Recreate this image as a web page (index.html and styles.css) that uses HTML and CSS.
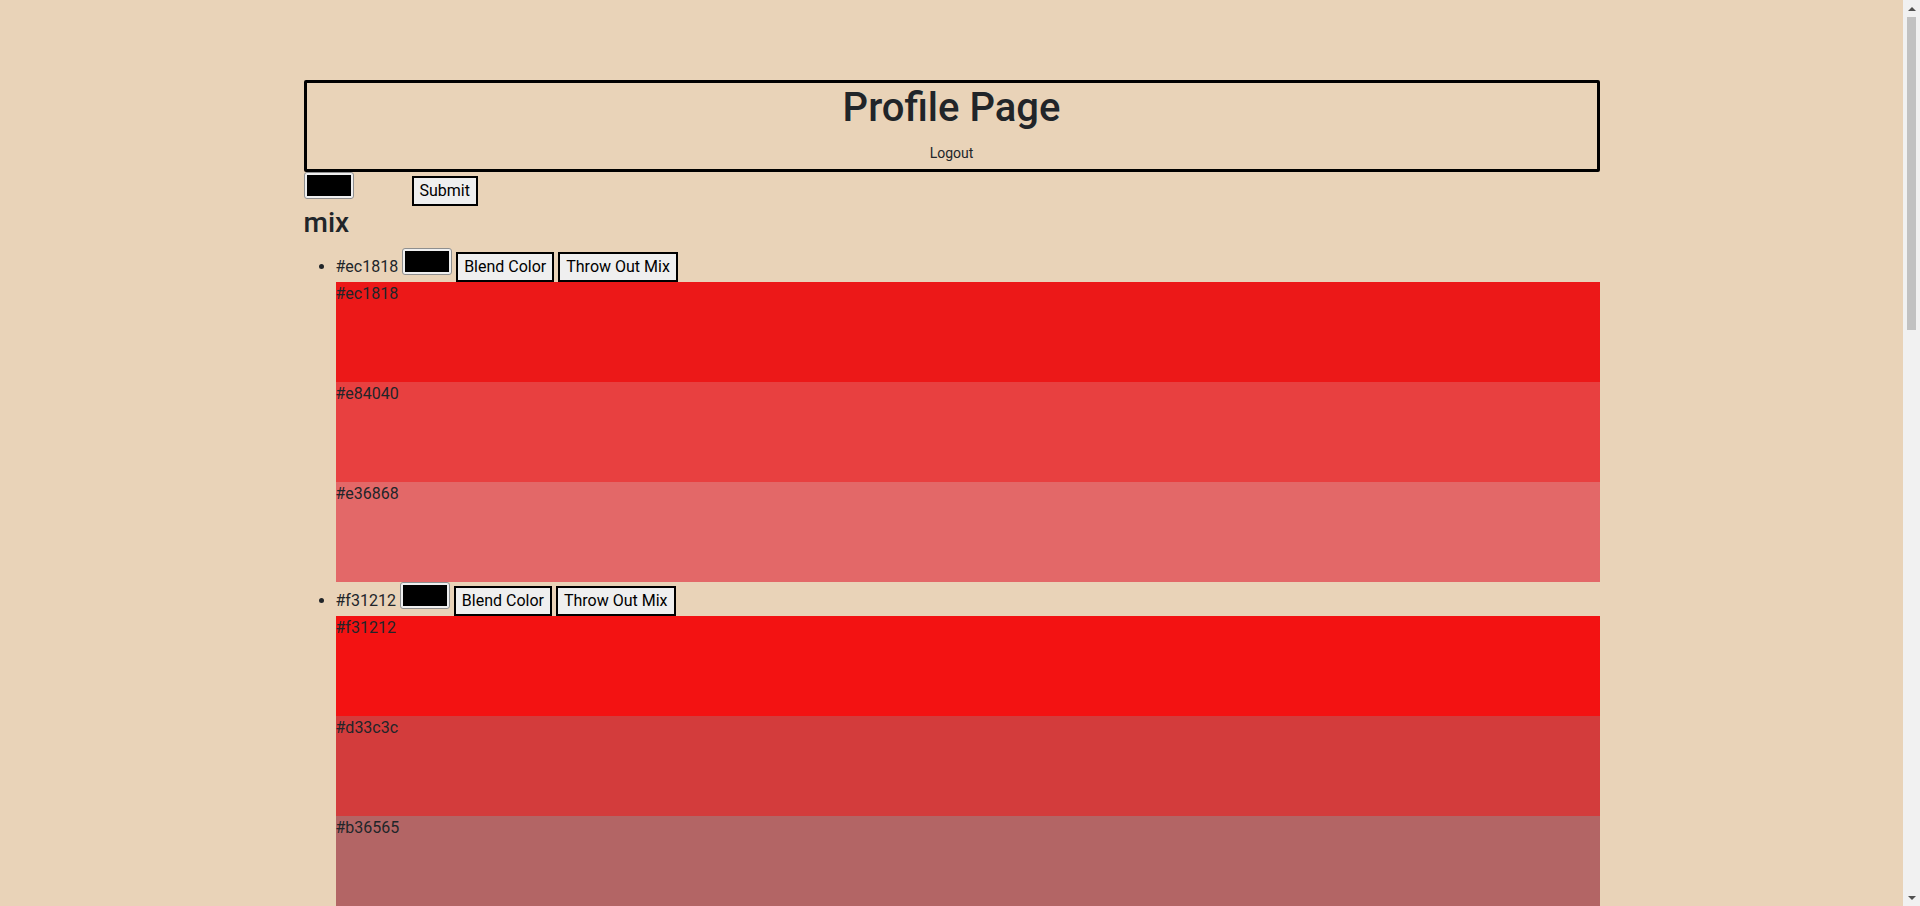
FILE: index.html
```
<!DOCTYPE html>
<html lang="en">
<head>
<meta charset="utf-8">
<title>Profile Page</title>
<link rel="stylesheet" href="styles.css">
</head>
<body>
<div class="container">
  <header class="page-header">
    <h1 class="page-title">Profile Page</h1>
    <div class="header-links"><a class="logout" href="#">Logout</a></div>
  </header>
  <form class="new-mix">
    <input type="color" class="color-pick" value="#000000"><button type="button" class="btn submit-btn">Submit</button>
  </form>
  <h3 class="section-title">mix</h3>
  <ul class="mix-list">
    <li class="mix-item">#ec1818 <input type="color" class="color-pick" value="#000000"> <button type="button" class="btn">Blend Color</button> <button type="button" class="btn">Throw Out Mix</button>
      <div class="swatch s-ec1818">#ec1818</div>
      <div class="swatch s-e84040">#e84040</div>
      <div class="swatch s-e36868">#e36868</div>
    </li>
    <li class="mix-item">#f31212 <input type="color" class="color-pick" value="#000000"> <button type="button" class="btn">Blend Color</button> <button type="button" class="btn">Throw Out Mix</button>
      <div class="swatch s-f31212">#f31212</div>
      <div class="swatch s-d33c3c">#d33c3c</div>
      <div class="swatch s-b36565">#b36565</div>
    </li>
    <li class="mix-item">#1848ec <input type="color" class="color-pick" value="#000000"> <button type="button" class="btn">Blend Color</button> <button type="button" class="btn">Throw Out Mix</button>
      <div class="swatch s-1848ec">#1848ec</div>
      <div class="swatch s-4064e8">#4064e8</div>
      <div class="swatch s-6883e3">#6883e3</div>
    </li>
    <li class="mix-item">#18ec48 <input type="color" class="color-pick" value="#000000"> <button type="button" class="btn">Blend Color</button> <button type="button" class="btn">Throw Out Mix</button>
      <div class="swatch s-18ec48">#18ec48</div>
      <div class="swatch s-40e864">#40e864</div>
      <div class="swatch s-68e383">#68e383</div>
    </li>
    <li class="mix-item">#ecd018 <input type="color" class="color-pick" value="#000000"> <button type="button" class="btn">Blend Color</button> <button type="button" class="btn">Throw Out Mix</button>
      <div class="swatch s-ecd018">#ecd018</div>
      <div class="swatch s-e8d040">#e8d040</div>
      <div class="swatch s-e3d068">#e3d068</div>
    </li>
    <li class="mix-item">#9c18ec <input type="color" class="color-pick" value="#000000"> <button type="button" class="btn">Blend Color</button> <button type="button" class="btn">Throw Out Mix</button>
      <div class="swatch s-9c18ec">#9c18ec</div>
      <div class="swatch s-a040e8">#a040e8</div>
      <div class="swatch s-a868e3">#a868e3</div>
    </li>
    <li class="mix-item">#18d0ec <input type="color" class="color-pick" value="#000000"> <button type="button" class="btn">Blend Color</button> <button type="button" class="btn">Throw Out Mix</button>
      <div class="swatch s-18d0ec">#18d0ec</div>
      <div class="swatch s-40c8e8">#40c8e8</div>
      <div class="swatch s-68c3e3">#68c3e3</div>
    </li>
  </ul>
</div>
<div class="scrollbar" aria-hidden="true">
  <span class="sb-arrow sb-up"></span>
  <span class="sb-thumb"></span>
  <span class="sb-arrow sb-down"></span>
</div>
</body>
</html>
```
FILE: styles.css
```
*, *::before, *::after { box-sizing: border-box; }

body {
  margin: 0 17px 0 0;
  font-family: Roboto, "Liberation Sans", Arial, sans-serif;
  font-size: 16px;
  line-height: 1.5;
  color: #212529;
  background: #e9d3b8;
}

.container {
  max-width: 1320px;
  margin: 0 auto;
  padding: 0 12px;
}

.page-header {
  margin-top: 80px;
  border: 3px solid #000;
  border-radius: 2px;
  text-align: center;
  padding: 1px 0 4px;
}

.page-title {
  margin: 0 0 9px;
  font-size: 40px;
  font-weight: 500;
  line-height: 1.2;
}

.header-links { line-height: 24px; }

.logout {
  font-size: 14px;
  color: #212529;
  text-decoration: none;
}

.new-mix { margin: 0; }

.color-pick {
  -webkit-appearance: none;
  appearance: none;
  width: 50px;
  height: 27px;
  margin: 0;
  padding: 2px;
  border: 1px solid #8f8f8f;
  border-radius: 3px;
  background: #efefef;
  vertical-align: baseline;
}

.color-pick::-webkit-color-swatch-wrapper { padding: 0; }
.color-pick::-webkit-color-swatch { border: none; border-radius: 0; }

.btn {
  margin: 0;
  font-family: inherit;
  font-size: inherit;
  line-height: inherit;
  padding: 1px 6px;
  border: 2px solid #000;
  border-radius: 0;
  background: #efefef;
  color: #000;
}

.submit-btn { margin-left: 58px; }

.section-title {
  margin: 0 0 8px;
  font-size: 28px;
  font-weight: 500;
  line-height: 1.2;
}

.mix-list {
  margin: 0 0 16px;
  padding-left: 32px;
}

.swatch {
  height: 100px;
  color: #212529;
}

.s-ec1818 { background: #ec1818; }
.s-e84040 { background: #e84040; }
.s-e36868 { background: #e36868; }
.s-f31212 { background: #f31212; }
.s-d33c3c { background: #d33c3c; }
.s-b36565 { background: #b36565; }
.s-1848ec { background: #1848ec; }
.s-4064e8 { background: #4064e8; }
.s-6883e3 { background: #6883e3; }
.s-18ec48 { background: #18ec48; }
.s-40e864 { background: #40e864; }
.s-68e383 { background: #68e383; }
.s-ecd018 { background: #ecd018; }
.s-e8d040 { background: #e8d040; }
.s-e3d068 { background: #e3d068; }
.s-9c18ec { background: #9c18ec; }
.s-a040e8 { background: #a040e8; }
.s-a868e3 { background: #a868e3; }
.s-18d0ec { background: #18d0ec; }
.s-40c8e8 { background: #40c8e8; }
.s-68c3e3 { background: #68c3e3; }

/* emulated classic scrollbar */
.scrollbar {
  position: fixed;
  top: 0;
  right: 0;
  width: 17px;
  height: 100vh;
  background: #f1f1f1;
  display: flex;
  flex-direction: column;
  align-items: center;
}

.sb-arrow {
  flex: 0 0 17px;
  width: 17px;
  display: flex;
  align-items: center;
  justify-content: center;
}

.sb-arrow::before {
  content: "";
  border-left: 4px solid transparent;
  border-right: 4px solid transparent;
}

.sb-up::before { border-bottom: 4px solid #505050; }
.sb-down::before { border-top: 4px solid #505050; }

.sb-thumb {
  width: 9px;
  height: 313px;
  background: #c1c1c1;
  margin-bottom: auto;
}
```
